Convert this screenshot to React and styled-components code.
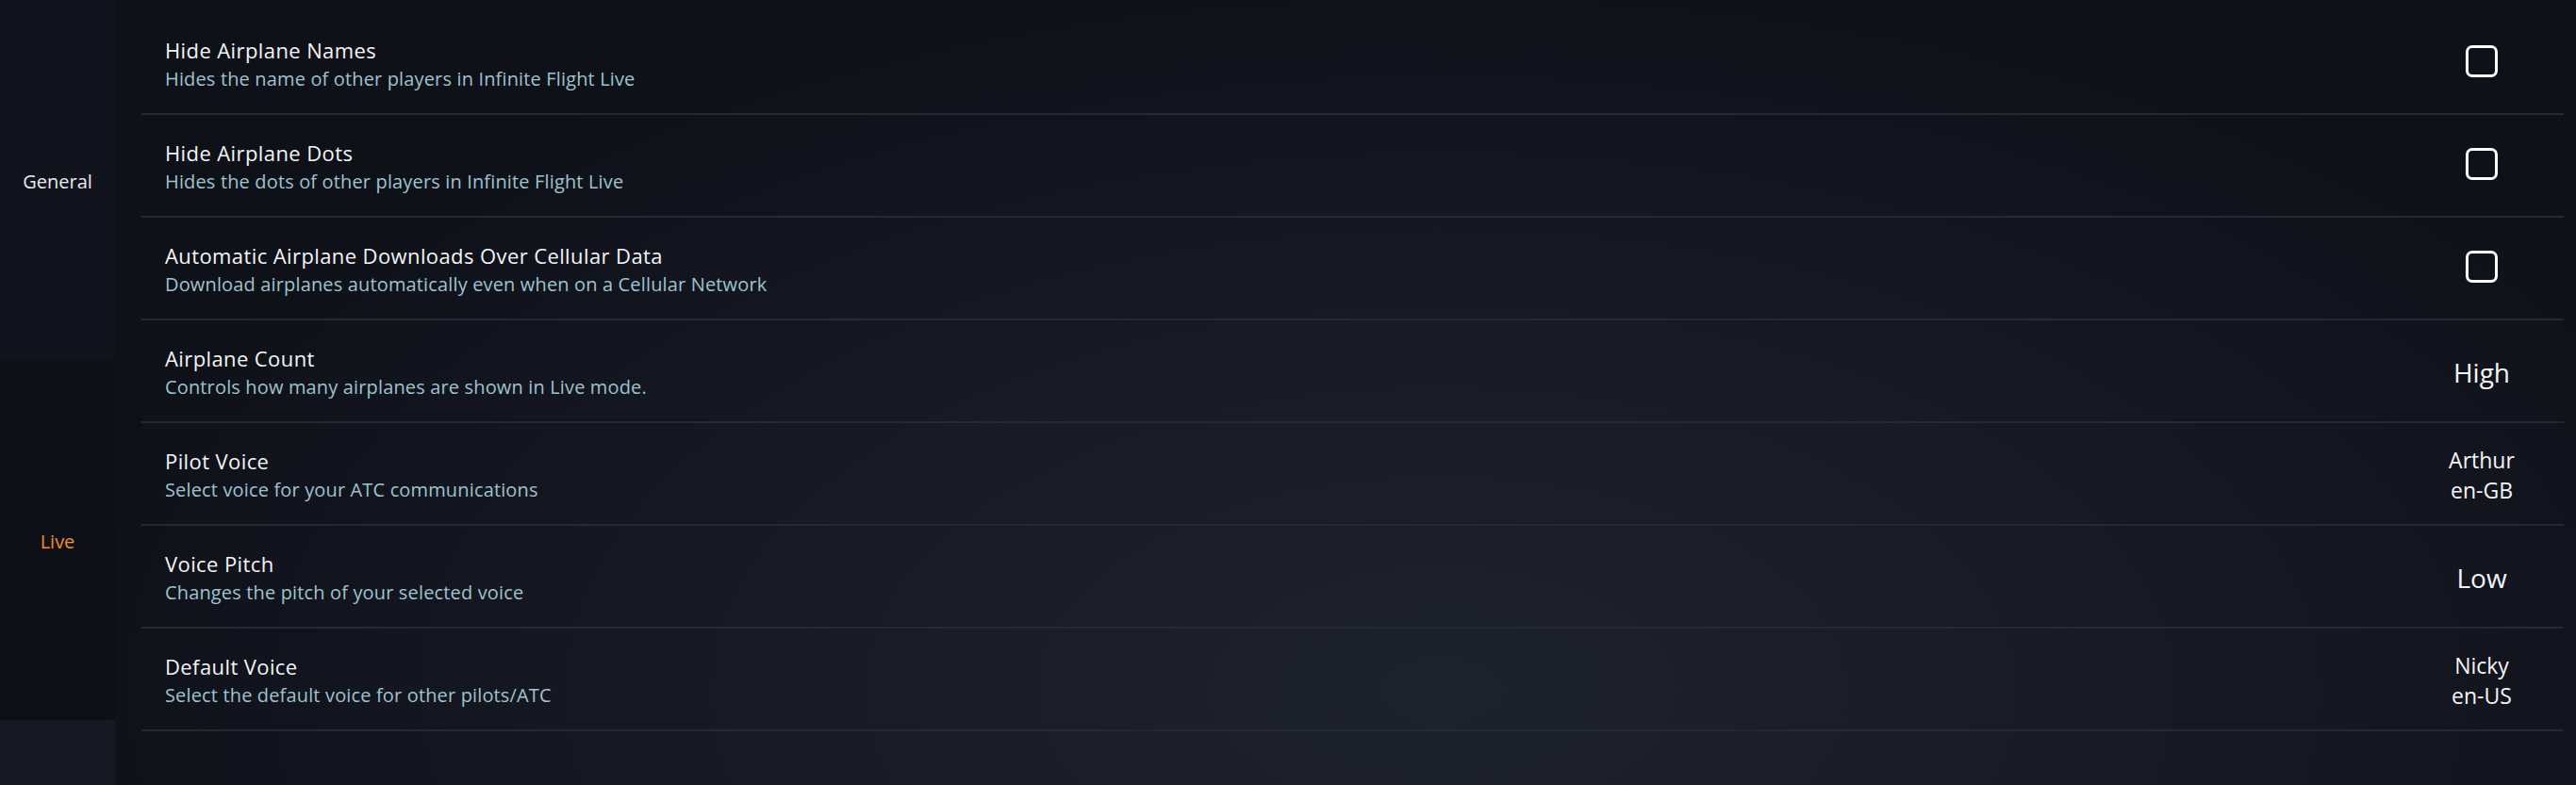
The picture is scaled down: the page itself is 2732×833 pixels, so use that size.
import styled, { createGlobalStyle } from "styled-components";

const GlobalStyle = createGlobalStyle`
  html, body {
    margin: 0;
    padding: 0;
  }
  body {
    width: 2732px;
    height: 833px;
    overflow: hidden;
    font-family: "Open Sans", "Noto Sans", sans-serif;
    background-color: #0e1118;
    background-image: radial-gradient(
      ellipse 55% 95% at 56% 88%,
      #1e222c 0%,
      #181b25 45%,
      #0e1118 100%
    );
  }
`;

const settings = [
  {
    title: "Hide Airplane Names",
    desc: "Hides the name of other players in Infinite Flight Live",
    kind: "check",
  },
  {
    title: "Hide Airplane Dots",
    desc: "Hides the dots of other players in Infinite Flight Live",
    kind: "check",
  },
  {
    title: "Automatic Airplane Downloads Over Cellular Data",
    desc: "Download airplanes automatically even when on a Cellular Network",
    kind: "check",
  },
  {
    title: "Airplane Count",
    desc: "Controls how many airplanes are shown in Live mode.",
    kind: "big",
    value: ["High"],
  },
  {
    title: "Pilot Voice",
    desc: "Select voice for your ATC communications",
    kind: "small",
    value: ["Arthur", "en-GB"],
  },
  {
    title: "Voice Pitch",
    desc: "Changes the pitch of your selected voice",
    kind: "big",
    value: ["Low"],
  },
  {
    title: "Default Voice",
    desc: "Select the default voice for other pilots/ATC",
    kind: "small",
    value: ["Nicky", "en-US"],
  },
];

function App() {
  return (
    <>
      <GlobalStyle />
      <Screen>
        <Sidebar>
          <Tab $tone="general">General</Tab>
          <Tab $tone="live" $active>
            Live
          </Tab>
          <SideFill />
        </Sidebar>
        <List>
          {settings.map((s) => (
            <Row key={s.title}>
              <Texts>
                <Title>{s.title}</Title>
                <Desc>{s.desc}</Desc>
              </Texts>
              <Value $kind={s.kind}>
                {s.kind === "check" ? (
                  <CheckBox />
                ) : (
                  s.value.map((v) => <div key={v}>{v}</div>)
                )}
              </Value>
            </Row>
          ))}
        </List>
      </Screen>
    </>
  );
}

const Screen = styled.div`
  display: flex;
  width: 2732px;
  height: 833px;
`;

const Sidebar = styled.div`
  width: 122px;
  display: flex;
  flex-direction: column;
  flex-shrink: 0;
`;

const Tab = styled.div`
  height: ${(p) => (p.$tone === "general" ? "381px" : "383px")};
  display: flex;
  align-items: center;
  justify-content: center;
  padding-top: 4px;
  box-sizing: border-box;
  font-size: 20px;
  color: ${(p) => (p.$active ? "#f0901c" : "#e8eaee")};
  background: ${(p) =>
    p.$tone === "general" ? "rgba(20, 24, 32, 0.55)" : "rgba(12, 14, 20, 0.35)"};
`;

const SideFill = styled.div`
  flex: 1;
  background: rgba(30, 34, 44, 0.45);
`;

const List = styled.div`
  flex: 1;
  display: flex;
  flex-direction: column;
  padding: 13px 13px 0 28px;
`;

const Row = styled.div`
  height: 107px;
  display: flex;
  align-items: center;
  padding-left: 25px;
  border-bottom: 2px solid #252932;
`;

const Texts = styled.div`
  flex: 1;
  display: flex;
  flex-direction: column;
  gap: 1px;
  margin-top: 4px;
`;

const Title = styled.div`
  font-size: 22px;
  line-height: 30px;
  letter-spacing: 0.4px;
  color: #f4f5f7;
`;

const Desc = styled.div`
  font-size: 20px;
  line-height: 30px;
  letter-spacing: 0.15px;
  color: #9dc3d0;
`;

const Value = styled.div`
  width: 120px;
  margin-right: 27px;
  margin-top: 2px;
  display: flex;
  flex-direction: column;
  align-items: center;
  color: #f4f5f7;
  font-size: ${(p) => (p.$kind === "big" ? "28px" : "23px")};
  line-height: ${(p) => (p.$kind === "big" ? "36px" : "32px")};
`;

const CheckBox = styled.div`
  width: 28px;
  height: 28px;
  border: 3px solid #ffffff;
  border-radius: 7px;
  margin-top: -5px;
`;

export default App;
